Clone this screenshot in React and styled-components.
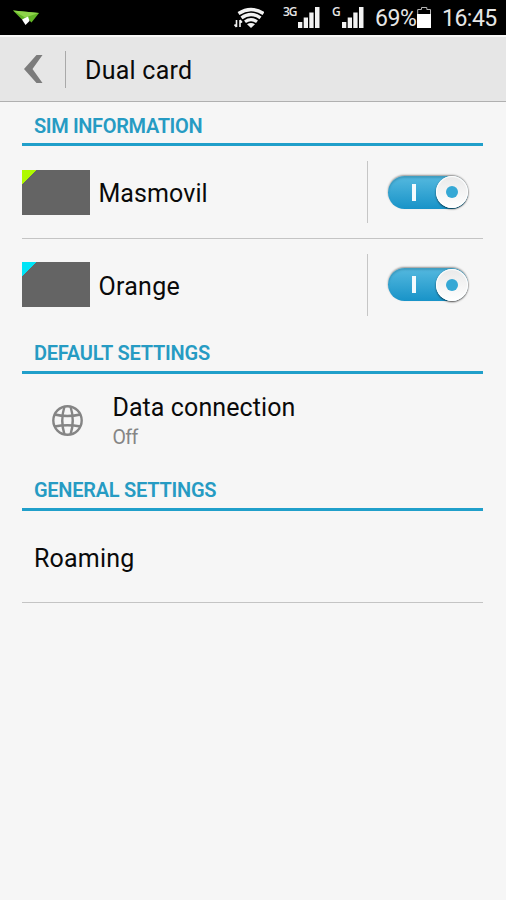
import React from "react";
import styled, { createGlobalStyle } from "styled-components";

const GlobalStyle = createGlobalStyle`
  * {
    box-sizing: border-box;
  }

  body {
    margin: 0;
    background: #f6f6f6;
    font-family: Roboto, "Liberation Sans", sans-serif;
  }
`;

const Screen = styled.div`
  width: 506px;
  height: 900px;
  overflow: hidden;
  background: #f6f6f6;
  color: #0a0a0a;
`;

const StatusBar = styled.div`
  display: flex;
  height: 35px;
  padding-left: 13px;
  background: #000000;
  color: #e6e6e6;
`;

const StatusIcon = styled.svg`
  flex: none;
  margin-left: ${(props) => props.$gap || 0}px;
`;

const StatusText = styled.span`
  width: ${(props) => props.$width}px;
  margin-left: ${(props) => props.$gap || 0}px;
  font-size: 23px;
  line-height: 37px;
  letter-spacing: ${(props) => props.$spacing || 0}px;
  white-space: nowrap;
`;

const NetworkType = styled.span`
  width: ${(props) => props.$width}px;
  margin-left: ${(props) => props.$gap}px;
  padding-top: 5px;
  font-family: "Open Sans", sans-serif;
  font-size: 12px;
  font-weight: 600;
  line-height: 14px;
  letter-spacing: -1px;
`;

const Header = styled.header`
  display: flex;
  align-items: center;
  height: 67px;
  padding-left: 23px;
  border-top: 2px solid #f8f8f8;
  border-bottom: 1.5px solid #b0b0b0;
  background: #e6e6e6;
`;

const HeaderDivider = styled.div`
  width: 1px;
  height: 37px;
  margin: 0 19px 0 22px;
  background: #a9a9a9;
`;

const Title = styled.h1`
  margin: 3px 0 0;
  font-size: 25px;
  font-weight: 400;
  line-height: 30px;
  letter-spacing: ${(props) => props.$spacing || 0}px;
`;

const Content = styled.main`
  padding: 0 22.6px 0 22.4px;
`;

const SectionTitle = styled.h2`
  height: 44px;
  margin: 0;
  padding: ${(props) => props.$top || 11}px 0 0 11.5px;
  border-bottom: 3px solid #209fca;
  color: #269bc3;
  font-size: 20px;
  font-weight: 600;
  line-height: 24px;
  letter-spacing: ${(props) => props.$spacing || 0}px;
`;

const Row = styled.div`
  display: flex;
  align-items: center;
  height: ${(props) => props.$height}px;
  padding-left: ${(props) => props.$indent || 0}px;
  border-bottom: ${(props) => (props.$line ? "1px solid #c4c4c4" : "none")};
`;

const SimCard = styled.div`
  width: 67.5px;
  height: 45px;
  margin-right: 8.5px;
  background: linear-gradient(
    135deg,
    ${(props) => props.$color} 10px,
    #646464 10.6px
  );
`;

const Label = styled.span`
  flex: 1;
  padding-top: 4px;
  font-size: 25px;
  line-height: 30px;
  letter-spacing: ${(props) => props.$spacing || 0}px;
`;

const RowDivider = styled.div`
  width: 1px;
  height: 62px;
  margin-right: 20.5px;
  background: #c6c6c6;
`;

const SwitchTrack = styled.button`
  display: flex;
  align-items: center;
  justify-content: space-between;
  width: 80px;
  height: 33px;
  margin-right: 15px;
  padding: 0 0 0 24px;
  border: none;
  border-radius: 17px;
  background: linear-gradient(#55b9df, #1893c8);
  box-shadow: 0 -1px 2px 0 rgba(0, 0, 0, 0.4),
    inset 0 2px 2px rgba(0, 70, 100, 0.25);
`;

const SwitchMark = styled.span`
  width: 4px;
  height: 17px;
  background: #f4fafd;
`;

const SwitchKnob = styled.span`
  display: flex;
  align-items: center;
  justify-content: center;
  width: 32px;
  height: 32px;
  border-radius: 50%;
  background: linear-gradient(#e9e9e9, #ffffff);
  box-shadow: 0 1px 2px rgba(0, 0, 0, 0.7), inset 0 0 1px 1px #ffffff;
`;

const SwitchDot = styled.span`
  width: 12px;
  height: 12px;
  border-radius: 50%;
  background: #35a8d5;
`;

const Details = styled.div`
  display: flex;
  flex-direction: column;
  margin-left: 28.5px;
`;

const Summary = styled.span`
  color: #858585;
  font-size: 19.5px;
  line-height: 29px;
  letter-spacing: ${(props) => props.$spacing || 0}px;
`;

function Signal({ gap }) {
  return (
    <StatusIcon $gap={gap} width="22" height="35" fill="#f2f2f2">
      <path d="M0 22h4.3v6H0zM5.7 17.5H10V28H5.7zM11.3 12.5h4.3V28h-4.3zM17 7h4.5v21H17z" />
    </StatusIcon>
  );
}

function Switch() {
  return (
    <SwitchTrack>
      <SwitchMark />
      <SwitchKnob>
        <SwitchDot />
      </SwitchKnob>
    </SwitchTrack>
  );
}

function SimRow({ name, color, spacing, height, line }) {
  return (
    <Row $height={height} $line={line}>
      <SimCard $color={color} />
      <Label $spacing={spacing}>{name}</Label>
      <RowDivider />
      <Switch />
    </Row>
  );
}

export default function App() {
  return (
    <>
      <GlobalStyle />
      <Screen>
        <StatusBar>
          <StatusIcon width="26" height="35">
            <path d="M0 10.500L26 13L18.500 22.500L16 20L9 19.500Z" fill="#62b526" />
            <path d="M0 10.500L26 13L12 17.500Z" fill="#8ed44a" />
            <path d="M9 19.500L15 16.500L16.500 21L12.500 25Z" fill="#ffffff" />
          </StatusIcon>
          <StatusIcon $gap={195} width="30" height="35" fill="none" stroke="#f2f2f2">
            <path d="M4.500 13.500Q17 5.500 29.500 13.500" strokeWidth="3.400" />
            <path d="M7.500 17.800Q17 11 26.500 17.800" strokeWidth="3.400" />
            <path d="M11 21.800Q17 17.500 23 21.800" strokeWidth="3.200" />
            <path d="M13 24.200Q17 21.700 21 24.200L17 28Z" fill="#f2f2f2" stroke="none" />
            <path d="M2.500 20v7M0.500 24.500l2 2.500M6 27v-7M8 22.500l-2 -2.500" strokeWidth="1.600" />
          </StatusIcon>
          <NetworkType $gap={19} $width={15}>3G</NetworkType>
          <Signal />
          <NetworkType $gap={12} $width={10}>G</NetworkType>
          <Signal />
          <StatusText $gap={11} $width={42} $spacing={-0.4}>69%</StatusText>
          <StatusIcon width="15" height="35">
            <path d="M0.700 14V9.500H4.500V7.500H9.800V9.500H13.500V14" fill="none" stroke="#b5b5b5" />
            <path d="M0 14h14v14H0z" fill="#ffffff" />
          </StatusIcon>
          <StatusText $gap={10} $width={56} $spacing={-0.5}>16:45</StatusText>
        </StatusBar>
        <Header>
          <svg width="20" height="30" fill="#7c7c7c">
            <path d="M13.500 1H19.500L9.500 15L19.500 29H13.500L1 15Z" />
          </svg>
          <HeaderDivider />
          <Title $spacing={0.25}>Dual card</Title>
        </Header>
        <Content>
          <SectionTitle $top={12} $spacing={-0.35}>SIM INFORMATION</SectionTitle>
          <SimRow name="Masmovil" color="#aef900" spacing={0.1} height={93} line />
          <SimRow name="Orange" color="#00e4f6" spacing={0.3} height={91} />
          <SectionTitle $spacing={-0.2}>DEFAULT SETTINGS</SectionTitle>
          <Row $height={93} $indent={29.5}>
            <svg width="32" height="32" fill="none" stroke="#858585" strokeWidth="2.4">
              <circle cx="15.500" cy="15.500" r="14.200" />
              <path d="M12.500 1.500Q8 15.500 12.500 29.500M18.500 1.500Q23 15.500 18.500 29.500" />
              <path d="M2.500 9.500Q15.500 12.500 28.500 9.500M2.500 21.500Q15.500 19 28.500 21.500" />
            </svg>
            <Details>
              <Label $spacing={0.1}>Data connection</Label>
              <Summary $spacing={-0.5}>Off</Summary>
            </Details>
          </Row>
          <SectionTitle $spacing={-0.25}>GENERAL SETTINGS</SectionTitle>
          <Row $height={92} $indent={11.5} $line>
            <Label $spacing={0.2}>Roaming</Label>
          </Row>
        </Content>
      </Screen>
    </>
  );
}
